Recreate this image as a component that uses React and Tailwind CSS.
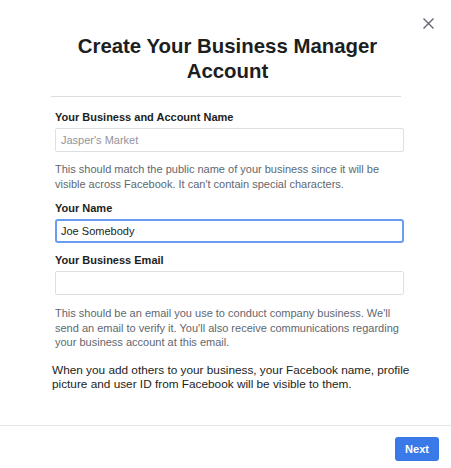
export default function App() {
    return (
        <div
            className="relative flex h-[468px] w-[451px] flex-col bg-white text-[#1c1e21]"
            style={{ fontFamily: '"Liberation Sans", Arial, sans-serif' }}
        >
            <button className="absolute right-[17px] top-[18px] text-[#606770]" aria-label="Close">
                <svg width="11" height="11" viewBox="0 0 11 11" fill="none" stroke="currentColor" strokeWidth="1.4">
                    <path d="M0.5 0.5 L10.5 10.5 M10.5 0.5 L0.5 10.5" />
                </svg>
            </button>

            <div className="flex-1 pl-[51px] pr-[47px] pt-[34px]">
                <h1 className="text-center text-[20.4px] font-bold leading-[25px]">
                    Create Your Business Manager
                    <br />
                    Account
                </h1>
                <div className="mr-[3px] mt-[12px] border-t border-[#dadde1]" />

                <div className="pl-1">
                    <label className="mt-[13px] block text-[11px] font-bold leading-[14px]">
                        Your Business and Account Name
                    </label>
                    <div className="mt-1 flex h-6 items-center rounded-[2px] border border-[#dddfe2] pl-[5px] text-[11px] text-[#90949c]">
                        Jasper's Market
                    </div>
                    <p className="mt-[10px] text-[11px] leading-[15px] text-[#606770]">
                        This should match the public name of your business since it will be
                        visible across Facebook. It can't contain special characters.
                    </p>

                    <label className="mt-[9px] block text-[11px] font-bold leading-[14px]">Your Name</label>
                    <div className="mt-1 flex h-6 items-center rounded-[3px] border-2 border-[#6a9cf3] pl-1 text-[11px]">
                        Joe Somebody
                    </div>

                    <label className="mt-[10px] block text-[11px] font-bold leading-[14px]">
                        Your Business Email
                    </label>
                    <div className="mt-1 h-6 rounded-[2px] border border-[#dddfe2]" />
                    <p className="mt-[11px] text-[11px] leading-[14.5px] text-[#606770]">
                        This should be an email you use to conduct company business. We'll
                        send an email to verify it. You'll also receive communications regarding
                        your business account at this email.
                    </p>
                </div>

                <p className="-mr-[8px] mt-[13px] pl-px text-[11.8px] leading-[14.5px]">
                    When you add others to your business, your Facebook name, profile
                    <br />
                    picture and user ID from Facebook will be visible to them.
                </p>
            </div>

            <div className="flex h-[43px] justify-end border-t border-[#e5e6e9] pr-[12px] pt-[11px]">
                <button className="h-6 w-11 rounded-[3px] bg-[#3a7ae8] text-[11px] font-bold text-white">
                    Next
                </button>
            </div>
        </div>
    )
}
